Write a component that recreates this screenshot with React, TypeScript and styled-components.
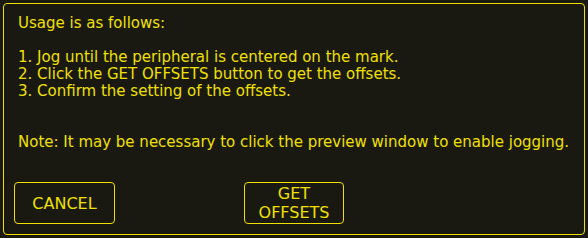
import styled, { createGlobalStyle } from 'styled-components';

const GlobalStyle = createGlobalStyle`
  html, body {
    margin: 0;
    background: #191811;
  }
`;

const Page = styled.div`
  width: 588px;
  height: 238px;
  padding: 3px;
  box-sizing: border-box;
  background: #191811;
  font-family: 'DejaVu Sans', sans-serif;
  color: #f0e000;
`;

const Panel = styled.div`
  height: 100%;
  box-sizing: border-box;
  border: 1px solid #f0e000;
  border-radius: 4px;
  padding: 11px 14px 10px 10px;
  display: flex;
  flex-direction: column;
`;

const Message = styled.div`
  padding-left: 4px;
  font-size: 15px;
  line-height: 17px;
  white-space: pre-line;
`;

const ButtonRow = styled.div`
  margin-top: auto;
  display: flex;
  gap: 129px;
`;

const ActionButton = styled.button<{ $width: number }>`
  width: ${(p) => p.$width}px;
  height: 42px;
  box-sizing: border-box;
  padding: 0 12px;
  border: 1px solid #f0e000;
  border-radius: 4px;
  background: transparent;
  color: #f0e000;
  font-family: 'DejaVu Sans', sans-serif;
  font-size: 16px;
  line-height: 19px;
  text-align: center;
`;

const text = `Usage is as follows:

1. Jog until the peripheral is centered on the mark.
2. Click the GET OFFSETS button to get the offsets.
3. Confirm the setting of the offsets.


Note: It may be necessary to click the preview window to enable jogging.`;

export default function App() {
  return (
    <Page>
      <GlobalStyle />
      <Panel>
        <Message>{text}</Message>
        <ButtonRow>
          <ActionButton $width={101}>CANCEL</ActionButton>
          <ActionButton $width={100}>GET OFFSETS</ActionButton>
        </ButtonRow>
      </Panel>
    </Page>
  );
}
